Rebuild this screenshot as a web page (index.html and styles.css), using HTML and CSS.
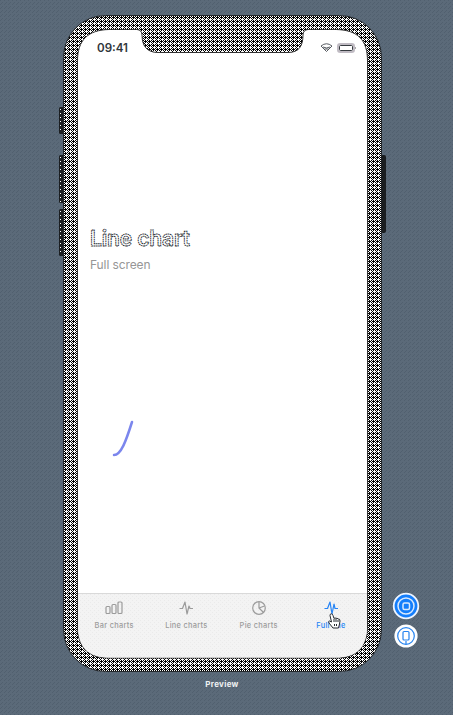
FILE: index.html
```html
<!DOCTYPE html>
<html lang="en">
<head>
<meta charset="utf-8">
<title>Preview</title>
<link rel="stylesheet" href="styles.css">
</head>
<body>
<main class="canvas">
  <svg class="device" viewBox="0 0 453 715" aria-hidden="true">
    <defs>
      <pattern id="dither" width="4" height="4" patternUnits="userSpaceOnUse" shape-rendering="crispEdges">
        <rect width="4" height="4" fill="#000"/>
        <path fill="#fff" d="M0 0h1v1h-1zM2 0h1v1h-1zM3 1h1v1h-1zM0 2h1v1h-1zM2 2h1v1h-1zM1 3h3v1h-3z"/>
      </pattern>
      <pattern id="grain" width="4" height="4" patternUnits="userSpaceOnUse" shape-rendering="crispEdges">
        <path fill="#51606f" d="M0 0h1v1h-1zM2 2h1v1h-1zM1 3h1v1h-1z"/>
      </pattern>
      <pattern id="light-grain" width="4" height="4" patternUnits="userSpaceOnUse" shape-rendering="crispEdges">
        <rect width="4" height="4" fill="#f3f3f3"/>
        <path fill="#eaeaea" d="M0 0h1v1h-1zM2 2h1v1h-1z"/>
      </pattern>
    </defs>
    <rect width="453" height="715" fill="url(#grain)"/>
    <g fill="#1b1e21">
      <rect x="59" y="107" width="8" height="27" rx="1.5"/>
      <rect x="59" y="155" width="8" height="48" rx="1.5"/>
      <rect x="59" y="209" width="8" height="47" rx="1.5"/>
    </g>
    <rect x="63.5" y="15.5" width="318" height="656" rx="42" fill="url(#dither)" stroke="#23272b"/>
    <g stroke="#fff" stroke-dasharray="1 3">
      <path d="M60.500 109v24M60.500 157v45M60.500 211v44"/>
    </g>
    <rect x="381" y="155" width="5" height="78" rx="2" fill="#1b1e21"/>
    <path d="M109 29.500H137Q142 30 142 35C142 46 147 52.500 158 52.500H288C299 52.500 303 46 303 35Q303 30 308 29.500H336C358 30 367.500 40 367.500 61V626C367.500 648 356 658 336 658H109C88 658 77.500 647 77.500 626V61C77.500 40 88 30 109 29.500Z" fill="#fff" stroke="#333"/>
    <path d="M78 594H367V626C367 648 356 657.500 336 657.500H109C88 657.500 78 647 78 626Z" fill="url(#light-grain)"/>
    <path d="M78 593.500H367" stroke="#d9d9d9"/>
  </svg>

  <section class="phone">
    <header class="status">
      <time>09:41</time>
      <svg class="status-icons" width="36" height="12" viewBox="0 0 36 12" fill="none">
        <path d="M1 4Q6.500-.5 12 4L6.500 9.500ZM3 5Q6.500 7 10 5M4.500 7H8.500" stroke="#454a50" stroke-width=".9"/>
        <rect x="18" y="2" width="16" height="8" rx="2.300" stroke="#c0bbc3" stroke-width="2"/>
        <rect x="19.500" y="3.500" width="13" height="5" rx="1" fill="#fff" stroke="#20252a" stroke-width=".9"/>
        <path d="M35.500 5v2" stroke="#aaa"/>
      </svg>
    </header>
    <div class="heading">
      <svg class="title" width="120" height="28">
        <text x="0" y="19.500" textLength="100">Line chart</text>
      </svg>
      <p>Full screen</p>
    </div>
    <svg class="line" width="30" height="42" viewBox="0 0 30 42"><path d="M4 37C11 37 16 23 22 4"/></svg>
    <nav>
      <div class="tab">
        <svg viewBox="0 0 18 16"><rect x="1" y="6.500" width="4" height="7" rx="1"/><rect x="7" y="4.500" width="4" height="9" rx="1"/><rect x="13" y="2" width="4" height="11.500" rx="1"/></svg>
        <span>Bar charts</span>
      </div>
      <div class="tab">
        <svg viewBox="0 0 18 16"><path d="M2.500 8.500H5.500L8 2L10 14L12 6L13 8.500H16"/></svg>
        <span>Line charts</span>
      </div>
      <div class="tab">
        <svg viewBox="0 0 18 16"><circle cx="9" cy="8" r="6.300"/><path d="M9 2V8L13.500 12.500M9 8L14.500 6"/></svg>
        <span>Pie charts</span>
      </div>
      <div class="tab active">
        <svg viewBox="0 0 18 16"><path d="M2.500 8.500H5.500L8 2L10 14L12 4L13 8.500H16"/></svg>
        <span>Full line</span>
        <svg class="cursor" viewBox="0 0 13 16"><path d="M3.500 9L2 2.500Q2 .8 3.300 .8T5 2.500L6 5.500Q7 4 8 5.500Q9 4.500 10 6Q12 5.500 12 8L11.500 11L10.500 15H5L1 10Q0 8 1.500 8Z"/><path d="M6 6v3M8 6v3M10 7v2M6.500 11v2M8.500 11v2"/></svg>
      </div>
    </nav>
  </section>
  <aside class="controls">
    <svg width="28" height="28" viewBox="0 0 28 28" fill="none" stroke="#d9e9fc" stroke-width="1.500"><circle cx="14" cy="14" r="12.300" fill="#147efb" stroke="#eef5ff" stroke-width="1.800"/><circle cx="14" cy="14" r="8"/><rect x="11" y="11" width="6.500" height="6.500" rx="1.500"/></svg>
    <svg width="24" height="24" viewBox="0 0 24 24" fill="none" stroke="#2583ef" stroke-width="1.200"><circle cx="12" cy="12" r="11.600" fill="#fff" stroke="none"/><circle cx="12" cy="12" r="8.300"/><rect x="9" y="7.500" width="6" height="8.500" rx="1"/><path d="M12 17v3"/></svg>
  </aside>
  <footer>Preview</footer>
</main>
</body>
</html>
```
FILE: styles.css
```css
body {
  margin: 0;
  font-family: Inter, "Liberation Sans", sans-serif;
}

.canvas {
  position: relative;
  width: 453px;
  height: 715px;
  overflow: hidden;
  background: #5b6a79;
}

.device {
  position: absolute;
  inset: 0;
  width: 453px;
  height: 715px;
}

.phone {
  position: relative;
  display: flex;
  flex-direction: column;
  width: 289px;
  height: 628px;
  padding: 30px 0 0 78px;
}

.status {
  display: flex;
  justify-content: space-between;
  align-items: center;
  height: 36px;
  padding: 0 11px 0 19px;
}

time {
  color: #30363c;
  font-size: 11.6px;
  font-weight: 600;
}

.heading {
  padding: 160px 0 0 12px;
}

.title {
  display: block;
  overflow: visible;
}

.title text {
  fill: #fff;
  stroke: #20252b;
  stroke-width: 0.9;
  stroke-dasharray: 1.6 0.6;
  font-size: 21px;
  font-weight: 600;
}

.heading p {
  margin: 2px 0 0;
  color: #969696;
  font-size: 12px;
  letter-spacing: -0.1px;
  line-height: 18px;
}

.line {
  display: block;
  margin: 144px 0 0 32px;
}

.line path {
  fill: none;
  stroke: #7b86ed;
  stroke-width: 2.5;
  stroke-linecap: round;
}

nav {
  display: grid;
  grid-template-columns: repeat(4, 72.3px);
  height: 64px;
  margin-top: auto;
}

.tab {
  position: relative;
  display: flex;
  flex-direction: column;
  align-items: center;
  padding-top: 6px;
  color: #9b9b9b;
  font-size: 7.4px;
  font-weight: 500;
  letter-spacing: 0.3px;
  line-height: 10px;
}

.tab svg {
  width: 18px;
  height: 16px;
  fill: none;
  stroke: currentColor;
  stroke-width: 1.2;
  stroke-linejoin: round;
}

.tab span {
  margin-top: 5px;
}

.active {
  color: #2684f5;
}

.tab .cursor {
  position: absolute;
  top: 19px;
  left: 33px;
  width: 13px;
  height: 16px;
  fill: #fff;
  stroke: #272b30;
  stroke-width: 1;
}

.controls {
  position: absolute;
  top: 592px;
  left: 392px;
  display: flex;
  flex-direction: column;
  align-items: center;
  gap: 4px;
}

footer {
  position: relative;
  margin-top: 21px;
  padding-right: 9px;
  color: #eef0f2;
  font-size: 8px;
  font-weight: 700;
  letter-spacing: 0.3px;
  line-height: 10px;
  text-align: center;
}
```
